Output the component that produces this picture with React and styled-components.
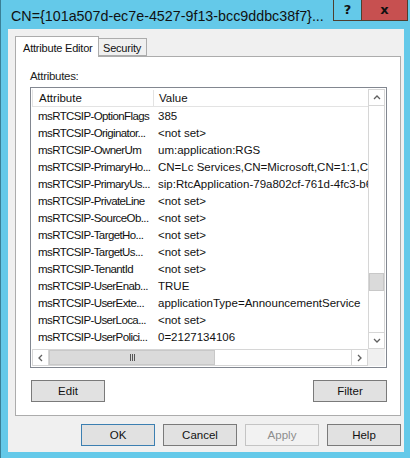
import React from 'react'
import styled, { createGlobalStyle, css } from 'styled-components'

const GlobalStyle = createGlobalStyle`
    html, body {
        margin: 0;
        padding: 0;
        background: #64c9e9;
    }
    * {
        box-sizing: border-box;
    }
`

const rows = [
    ['msRTCSIP-OptionFlags', '385'],
    ['msRTCSIP-Originator...', '<not set>'],
    ['msRTCSIP-OwnerUm', 'um:application:RGS'],
    ['msRTCSIP-PrimaryHo...', 'CN=Lc Services,CN=Microsoft,CN=1:1,CN=Phone,CN=Services'],
    ['msRTCSIP-PrimaryUs...', 'sip:RtcApplication-79a802cf-761d-4fc3-b69d-1ab2c3d4e5f6'],
    ['msRTCSIP-PrivateLine', '<not set>'],
    ['msRTCSIP-SourceOb...', '<not set>'],
    ['msRTCSIP-TargetHo...', '<not set>'],
    ['msRTCSIP-TargetUs...', '<not set>'],
    ['msRTCSIP-TenantId', '<not set>'],
    ['msRTCSIP-UserEnab...', 'TRUE'],
    ['msRTCSIP-UserExte...', 'applicationType=AnnouncementService'],
    ['msRTCSIP-UserLoca...', '<not set>'],
    ['msRTCSIP-UserPolici...', '0=2127134106'],
]

const Chevron = ({ dir }) => {
    const points = {
        up: '1,5 4,2 7,5',
        down: '1,2 4,5 7,2',
        left: '5,1 2,4 5,7',
        right: '2,1 5,4 2,7',
    }[dir]
    const vertical = dir === 'up' || dir === 'down'
    return (
        <svg width={vertical ? 8 : 7} height={vertical ? 7 : 8} viewBox={vertical ? '0 0 8 7' : '0 0 7 8'}>
            <polyline points={points} fill="none" stroke="#606060" strokeWidth="1.3" />
        </svg>
    )
}

export default function App() {
    return (
        <>
            <GlobalStyle />
            <Window>
                <TitleBar>
                    <Title>CN={'{'}101a507d-ec7e-4527-9f13-bcc9ddbc38f7{'}'}...</Title>
                    <CaptionButton>?</CaptionButton>
                    <CaptionButton close>x</CaptionButton>
                </TitleBar>
                <Client>
                    <Tabs>
                        <Tab active>Attribute Editor</Tab>
                        <Tab>Security</Tab>
                    </Tabs>
                    <Panel>
                        <Label>Attributes:</Label>
                        <ListBox>
                            <ListContent>
                                <HeaderRow>
                                    <HeaderCell>Attribute</HeaderCell>
                                    <HeaderCell divider>Value</HeaderCell>
                                </HeaderRow>
                                {rows.map(([name, value]) => (
                                    <Row key={name}>
                                        <NameCell>{name}</NameCell>
                                        <ValueCell>{value}</ValueCell>
                                    </Row>
                                ))}
                            </ListContent>
                            <VScroll>
                                <ArrowBox><Chevron dir="up" /></ArrowBox>
                                <VTrack>
                                    <VThumb />
                                </VTrack>
                                <ArrowBox><Chevron dir="down" /></ArrowBox>
                            </VScroll>
                            <HScroll>
                                <ArrowBox><Chevron dir="left" /></ArrowBox>
                                <HTrack>
                                    <HThumb>
                                        <Grip><i /><i /><i /></Grip>
                                    </HThumb>
                                </HTrack>
                                <ArrowBox><Chevron dir="right" /></ArrowBox>
                            </HScroll>
                            <Corner />
                        </ListBox>
                        <PanelButtons>
                            <Button>Edit</Button>
                            <Button>Filter</Button>
                        </PanelButtons>
                    </Panel>
                    <DialogButtons>
                        <Button primary>OK</Button>
                        <Button>Cancel</Button>
                        <Button disabled>Apply</Button>
                        <Button>Help</Button>
                    </DialogButtons>
                </Client>
            </Window>
        </>
    )
}

const uiFont = `"Liberation Sans", Arial, sans-serif`

const Window = styled.div`
    width: 410px;
    height: 458px;
    background: #64c9e9;
    border-left: 1px solid #3a7f96;
    display: flex;
    flex-direction: column;
    font-family: ${uiFont};
    font-size: 11.5px;
    overflow: hidden;
`

const TitleBar = styled.div`
    height: 29px;
    display: flex;
    align-items: flex-start;
    padding-left: 10px;
    padding-right: 2px;
`

const Title = styled.div`
    flex: 1;
    font-size: 14.3px;
    color: #111;
    padding-top: 8px;
    white-space: nowrap;
    overflow: hidden;
`

const CaptionButton = styled.div`
    height: 21px;
    width: ${({ close }) => close ? '46px' : '29px'};
    background: ${({ close }) => close ? '#c75050' : '#64c9e9'};
    border: 1px solid #4f3f2f;
    border-top: none;
    border-left: ${({ close }) => close ? 'none' : '1px solid #4f3f2f'};
    display: flex;
    align-items: center;
    justify-content: center;
    font-family: "DejaVu Sans", sans-serif;
    font-weight: bold;
    font-size: 13px;
    color: #111;
    padding-bottom: 2px;
`

const Client = styled.div`
    flex: 1;
    margin: 0 6px 6px 7px;
    background: #f0f0f0;
    padding: 8px 3px 0 7px;
    display: flex;
    flex-direction: column;
`

const Tabs = styled.div`
    display: flex;
    align-items: flex-end;
    height: 20px;
    position: relative;
    z-index: 1;
    margin-bottom: -1px;
`

const Tab = styled.div`
    font-size: 11px;
    letter-spacing: -0.2px;
    color: #111;
    border: 1px solid #acacac;
    white-space: nowrap;
    ${({ active }) => active ? css`
        height: 21px;
        width: 84px;
        background: #fff;
        border-bottom: none;
        padding: 5px 0 0 7px;
    ` : css`
        height: 18px;
        width: 48px;
        background: #f0f0f0;
        border-left: none;
        padding: 3px 0 0 4px;
        margin-bottom: 1px;
    `}
`

const Panel = styled.div`
    height: 360px;
    background: #fff;
    border: 1px solid #acacac;
    padding: 13px 13px 0 14px;
    display: flex;
    flex-direction: column;
`

const Label = styled.div`
    color: #222;
    height: 17px;
    letter-spacing: -0.3px;
`

const ListBox = styled.div`
    height: 281px;
    border: 1px solid #828790;
    padding: 1px;
    display: grid;
    grid-template-columns: 1fr 17px;
    grid-template-rows: 1fr 17px;
`

const ListContent = styled.div`
    overflow: hidden;
    color: #111;
`

const HeaderRow = styled.div`
    display: flex;
    height: 18px;
    border: 1px solid #e3e3e3;
    border-right: none;
    border-top-color: #fff;
`

const HeaderCell = styled.div`
    width: ${({ divider }) => divider ? 'auto' : '120px'};
    flex: ${({ divider }) => divider ? '1' : 'none'};
    padding-left: ${({ divider }) => divider ? '5px' : '6px'};
    border-left: ${({ divider }) => divider ? '1px solid #e3e3e3' : 'none'};
    line-height: 17px;
    white-space: nowrap;
`

const Row = styled.div`
    display: flex;
    height: 17px;
    line-height: 18px;
    white-space: nowrap;
`

const NameCell = styled.div`
    width: 121px;
    flex: none;
    padding-left: 6px;
    letter-spacing: -0.6px;
    overflow: hidden;
`

const ValueCell = styled.div`
    flex: 1;
    padding-left: 5px;
    overflow: hidden;
`

const VScroll = styled.div`
    display: flex;
    flex-direction: column;
    background: #fff;
`

const ArrowBox = styled.div`
    width: 17px;
    height: 17px;
    flex: none;
    border: 1px solid #d6d6d6;
    display: flex;
    align-items: center;
    justify-content: center;
    background: #fff;
`

const VTrack = styled.div`
    flex: 1;
    border-left: 1px solid #d6d6d6;
    border-right: 1px solid #d6d6d6;
    display: flex;
    flex-direction: column;
    justify-content: flex-end;
    padding-bottom: 41px;
`

const VThumb = styled.div`
    height: 18px;
    background: #dadada;
    border: 1px solid #c8c8c8;
`

const HScroll = styled.div`
    display: flex;
    background: #fff;
`

const HTrack = styled.div`
    flex: 1;
    border-top: 1px solid #d6d6d6;
    border-bottom: 1px solid #d6d6d6;
    display: flex;
`

const HThumb = styled.div`
    width: 166px;
    background: #dadada;
    border: 1px solid #c8c8c8;
    display: flex;
    align-items: center;
    justify-content: center;
`

const Grip = styled.div`
    display: flex;
    gap: 1px;

    i {
        width: 1px;
        height: 7px;
        background: #555;
    }
`

const Corner = styled.div`
    background: #f0f0f0;
`

const PanelButtons = styled.div`
    display: flex;
    justify-content: space-between;
    margin-top: 12px;
    padding-left: 1px;
`

const Button = styled.div`
    width: 74px;
    height: 22px;
    display: flex;
    align-items: center;
    justify-content: center;
    background: #e1e1e1;
    color: #111;
    border: 1px solid #7a7a7a;
    ${({ primary }) => primary && css`
        border-color: #3c7fb1;
    `}
    ${({ disabled }) => disabled && css`
        border-color: #c4c4c4;
        background: #f2f2f2;
        color: #8d8d8d;
    `}
`

const DialogButtons = styled.div`
    display: flex;
    justify-content: flex-end;
    gap: 8px;
    margin-top: 8px;
`
